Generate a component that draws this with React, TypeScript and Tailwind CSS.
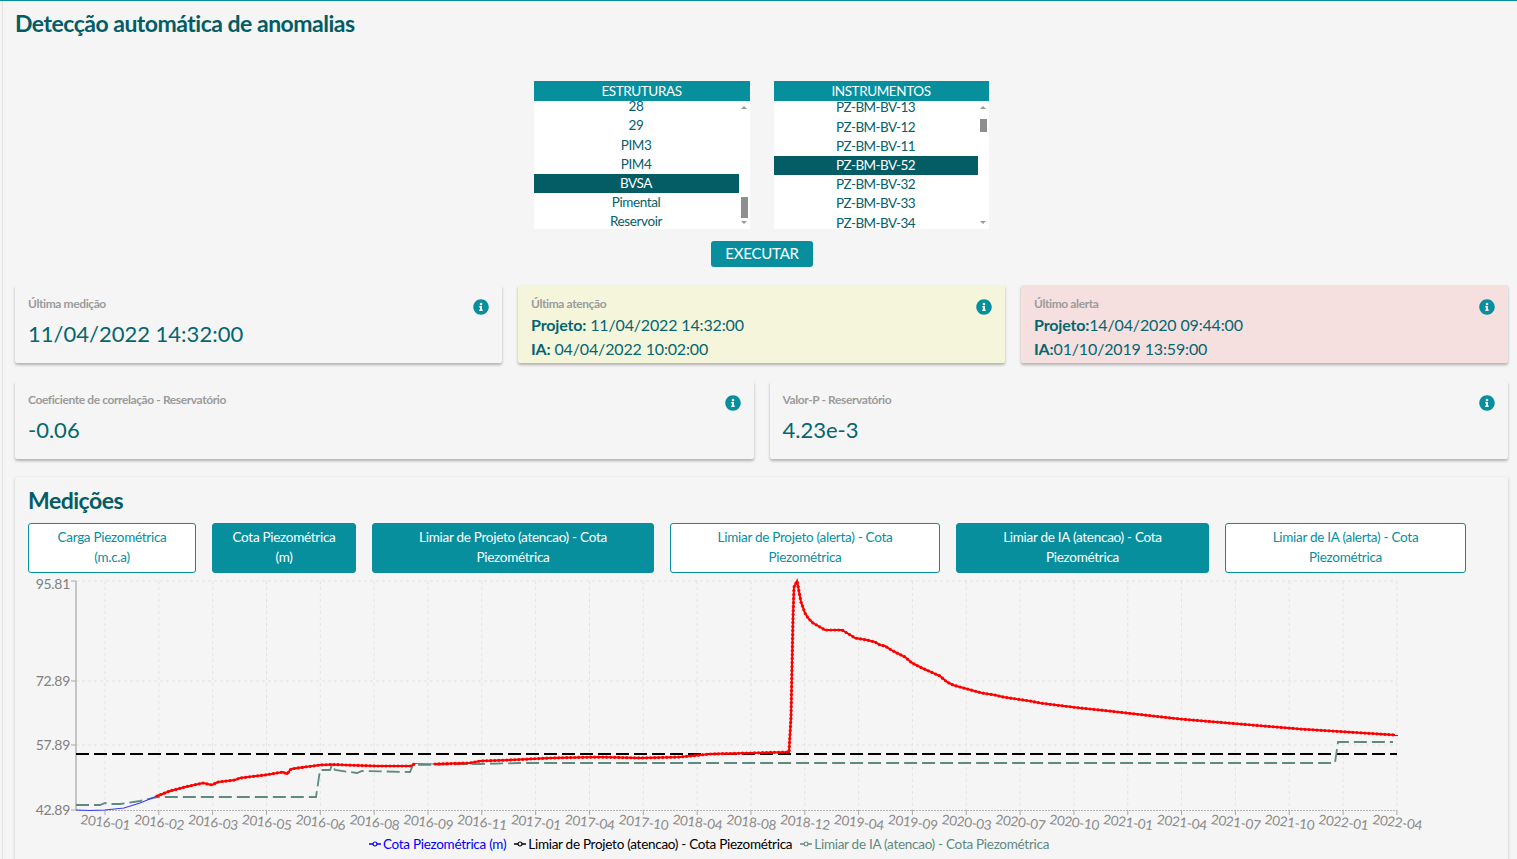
import { FaInfoCircle } from 'react-icons/fa';

const estruturas = ['28', '29', 'PIM3', 'PIM4', 'BVSA', 'Pimental', 'Reservoir'];
const instrumentos = ['PZ-BM-BV-13', 'PZ-BM-BV-12', 'PZ-BM-BV-11', 'PZ-BM-BV-52', 'PZ-BM-BV-32', 'PZ-BM-BV-33', 'PZ-BM-BV-34'];

const xLabels = [
  '2016-01', '2016-02', '2016-03', '2016-05', '2016-06', '2016-08', '2016-09', '2016-11', '2017-01',
  '2017-04', '2017-10', '2018-04', '2018-08', '2018-12', '2019-04', '2019-09', '2020-03', '2020-07',
  '2020-10', '2021-01', '2021-04', '2021-07', '2021-10', '2022-01', '2022-04',
];

type Pt = [number, number];

const blueLine: Pt[] = [[76, 810], [90, 810.5], [105, 810], [124, 808], [140, 803], [157, 796]];

const redA: Pt[] = [
  [157, 796], [170, 791], [185, 787], [203, 783], [212, 785], [218, 782], [235, 780], [240, 778], [265, 775],
  [283, 772], [287, 774], [291, 769], [305, 767], [320, 765], [332, 764.5], [375, 766], [411, 766], [415, 763.5],
];
const redB: Pt[] = [
  [435, 764], [470, 763], [480, 761], [510, 760], [550, 758], [600, 757], [640, 758], [680, 757], [710, 754],
  [750, 753], [789, 752], [791, 717], [793, 617], [794, 587], [797, 581], [798, 586], [801, 602], [805, 613],
  [808, 618], [813, 623], [820, 627], [825, 630], [842, 630], [847, 633], [852, 636], [855, 638], [867, 640],
  [875, 642], [880, 645], [885, 646], [893, 651], [905, 657], [912, 663], [922, 668], [940, 676], [947, 682],
  [953, 685], [960, 687], [982, 693], [995, 695], [1003, 697], [1030, 701], [1040, 703], [1080, 708],
  [1100, 710], [1180, 719], [1300, 729], [1395, 735],
];

const greenLine: Pt[] = [
  [76, 805], [100, 805], [105, 803], [110, 804], [120, 804], [140, 801], [157, 797], [316, 797], [320, 770],
  [330, 770], [332, 765], [335, 770], [357, 773], [362, 771], [410, 772], [413, 765], [480, 764], [520, 763],
  [1335, 763], [1338, 742], [1393, 742],
];

const toPoints = (pts: Pt[]) => pts.map(p => p.join(',')).join(' ');

// walks along the line and drops a marker every few px, like the chart's data points
function markers(pts: Pt[], step: number): Pt[] {
  const out: Pt[] = [];
  let left = 0;
  for (let i = 0; i < pts.length - 1; i++) {
    const [x1, y1] = pts[i];
    const [x2, y2] = pts[i + 1];
    const len = Math.hypot(x2 - x1, y2 - y1);
    let d = left;
    while (d < len) {
      out.push([x1 + ((x2 - x1) * d) / len, y1 + ((y2 - y1) * d) / len]);
      d += step;
    }
    left = d - len;
  }
  return out;
}

function ListBox({ title, items, selected, offset, thumb, width, tracking }: {
  title: string;
  items: string[];
  selected: string;
  offset: string;
  thumb: string;
  width: string;
  tracking: string;
}) {
  return (
    <div className={width}>
      <div className="h-5 bg-[#078f9e] text-center text-[13.5px] leading-5 tracking-[-0.4px] text-white">{title}</div>
      <div className="flex h-32 bg-white">
        <div className="flex-1 overflow-hidden">
          <div className={offset}>
            {items.map(item => (
              <div
                key={item}
                className={`h-[19.2px] text-center text-[13.5px] leading-[18px] ${tracking} ${item === selected ? 'bg-[#045c65] text-white' : 'text-[#04606a]'}`}
              >
                {item}
              </div>
            ))}
          </div>
        </div>
        <div className="flex w-[11px] flex-col items-center bg-white pt-[5px] pb-[5px]">
          <div className="h-0 w-0 border-x-[3px] border-b-[3px] border-x-transparent border-b-[#999]" />
          <div className={`w-[7px] bg-[#8f8f8f] ${thumb}`} />
          <div className="mt-auto h-0 w-0 border-x-[3px] border-t-[3px] border-x-transparent border-t-[#999]" />
        </div>
      </div>
    </div>
  );
}

function InfoCard({ label, bg = 'bg-[#f5f5f5]', children }: { label: string; bg?: string; children: React.ReactNode }) {
  return (
    <div className={`relative h-[78px] rounded-[2px] px-[13px] pt-[11px] shadow-[0_2px_3px_rgba(0,0,0,0.28)] ${bg}`}>
      <FaInfoCircle className="absolute top-[14px] right-[13px] text-[#078f9e]" size={16} />
      <div className="text-[12px] leading-4 font-bold tracking-[-0.4px] text-[#9c9c9c]">{label}</div>
      {children}
    </div>
  );
}

function BigValue({ children }: { children: React.ReactNode }) {
  return <div className="mt-[6px] text-[22px] leading-8 text-[#04666f]">{children}</div>;
}

function SmallValue({ label, value }: { label: string; value: string }) {
  return (
    <div className="text-[16px] leading-6 tracking-[-0.15px] text-[#04666f]">
      <b>{label}</b>{value}
    </div>
  );
}

function ToggleButton({ width, active, children }: { width: string; active: boolean; children: React.ReactNode }) {
  return (
    <div
      className={`flex h-[50px] items-center justify-center rounded-[3px] border border-[#078f9e] px-2 pb-[2px] text-center text-[13.5px] leading-5 tracking-[-0.28px] ${width} ${active ? 'bg-[#078f9e] text-white' : 'bg-white text-[#078f9e]'}`}
    >
      <span>{children}</span>
    </div>
  );
}

function LegendItem({ color, children }: { color: string; children: React.ReactNode }) {
  return (
    <span className="flex items-center gap-[2px]" style={{ color }}>
      <svg width="12" height="8" viewBox="0 0 12 8">
        <line x1="0" y1="4" x2="12" y2="4" stroke={color} strokeWidth="1.5" />
        <circle cx="6" cy="4" r="2" fill="#f5f5f5" stroke={color} strokeWidth="1.2" />
      </svg>
      {children}
    </span>
  );
}

function Chart() {
  const ticks = xLabels.map((_, i) => 105 + i * 53.83);
  return (
    <svg width="1470" height="262" viewBox="28 575 1470 262" className="mt-[2px] block">
      {ticks.map(x => (
        <line key={x} x1={x} y1="581" x2={x} y2="810" stroke="#e3e3e3" strokeDasharray="3 3" />
      ))}
      {[581, 681, 745].map(y => (
        <line key={y} x1="76" y1={y} x2="1397" y2={y} stroke="#e3e3e3" strokeDasharray="3 3" />
      ))}
      <line x1="76" y1="581" x2="76" y2="810" stroke="#c4c4c4" strokeWidth="2" />
      <line x1="76" y1="810.5" x2="1397" y2="810.5" stroke="#b5b5b5" strokeDasharray="2 1" />
      {[581, 681, 745, 810].map(y => (
        <line key={y} x1="71" y1={y} x2="76" y2={y} stroke="#aaa" />
      ))}
      {ticks.map(x => (
        <line key={x} x1={x} y1="810" x2={x} y2="815" stroke="#aaa" />
      ))}
      {[['95.81', 584], ['72.89', 681], ['57.89', 745], ['42.89', 810]].map(([t, y]) => (
        <text key={t} x="70" y={Number(y) + 5} textAnchor="end" fontSize="14" letterSpacing="-0.3" fill="#7f7f7f">{t}</text>
      ))}
      {xLabels.map((t, i) => (
        <text
          key={i}
          x={ticks[i] - 25}
          y="824"
          fontSize="13.5"
          letterSpacing="-0.3"
          fill="#8a8a8a"
          transform={`rotate(7 ${ticks[i] - 25} 824)`}
        >
          {t}
        </text>
      ))}
      <line x1="76" y1="754" x2="1397" y2="754" stroke="#000" strokeWidth="2" strokeDasharray="13 5" />
      <polyline points={toPoints(greenLine)} fill="none" stroke="#5f8a80" strokeWidth="1.8" strokeDasharray="13 5" />
      <polyline points={toPoints(blueLine)} fill="none" stroke="#3a3aff" strokeWidth="1.2" />
      <polyline points={toPoints([[415, 763.5], [435, 764]])} fill="none" stroke="#4a7f8f" strokeWidth="1.2" />
      <polyline points={toPoints([[1393, 735.5], [1398, 735.5]])} fill="none" stroke="#3a3aff" strokeWidth="1.2" />
      <polyline points={toPoints(redA)} fill="none" stroke="#ff0000" strokeWidth="2" />
      <polyline points={toPoints(redB)} fill="none" stroke="#ff0000" strokeWidth="2" />
      {[...markers(redA, 4), ...markers(redB, 4)].map(([x, y], i) => (
        <circle key={i} cx={x} cy={y} r="1.6" fill="#ff0000" />
      ))}
    </svg>
  );
}

export default function App() {
  return (
    <div className="h-[859px] overflow-hidden border-t border-[#078f9e] bg-[#f5f5f5] font-['Lato',sans-serif]">
      <div className="ml-[2px] h-full border-l border-[#e2e2e2] pr-[9px] pl-3">
        <h1 className="pt-[7px] text-[23px] leading-[30px] font-bold tracking-[-0.5px] text-[#045c65]">
          Detecção automática de anomalias
        </h1>

        <div className="mt-[43px] flex justify-center gap-6 pr-[1px]">
          <ListBox title="ESTRUTURAS" items={estruturas} selected="BVSA" offset="-mt-[3.8px]" thumb="mt-[88px] h-[21px]" width="w-[216px]" tracking="tracking-[-0.4px]" />
          <ListBox title="INSTRUMENTOS" items={instrumentos} selected="PZ-BM-BV-52" offset="-mt-[2.6px]" thumb="mt-[10px] h-[13px]" width="w-[215px]" tracking="tracking-[-0.6px]" />
        </div>

        <div className="mt-3 flex justify-center pl-[1px]">
          <div className="flex h-[26px] w-[102px] items-center justify-center rounded-[3px] bg-[#078f9e] pb-[1px] text-[15px] tracking-[-0.2px] text-white">
            EXECUTAR
          </div>
        </div>

        <div className="mt-[18px] grid grid-cols-3 gap-4">
          <InfoCard label="Última medição">
            <BigValue>11/04/2022 14:32:00</BigValue>
          </InfoCard>
          <InfoCard label="Última atenção" bg="bg-[#f5f5dc]">
            <div className="mt-[1px]">
              <SmallValue label="Projeto:" value=" 11/04/2022 14:32:00" />
              <SmallValue label="IA:" value=" 04/04/2022 10:02:00" />
            </div>
          </InfoCard>
          <InfoCard label="Último alerta" bg="bg-[#f5dfdf]">
            <div className="mt-[1px]">
              <SmallValue label="Projeto:" value="14/04/2020 09:44:00" />
              <SmallValue label="IA:" value="01/10/2019 13:59:00" />
            </div>
          </InfoCard>
        </div>

        <div className="mt-[18px] grid grid-cols-2 gap-4">
          <InfoCard label="Coeficiente de correlação - Reservatório">
            <BigValue>-0.06</BigValue>
          </InfoCard>
          <InfoCard label="Valor-P - Reservatório">
            <BigValue>4.23e-3</BigValue>
          </InfoCard>
        </div>

        <div className="mt-[18px] h-[400px] rounded-[2px] px-[13px] pt-[7px] shadow-[0_1px_3px_rgba(0,0,0,0.22)]">
          <h2 className="text-[23px] leading-8 font-bold tracking-[-0.5px] text-[#045c65]">Medições</h2>
          <div className="mt-[7px] flex gap-4">
            <ToggleButton width="w-[168px]" active={false}>Carga Piezométrica<br />(m.c.a)</ToggleButton>
            <ToggleButton width="w-[144px]" active>Cota Piezométrica<br />(m)</ToggleButton>
            <ToggleButton width="w-[282px]" active>Limiar de Projeto (atencao) - Cota<br />Piezométrica</ToggleButton>
            <ToggleButton width="w-[270px]" active={false}>Limiar de Projeto (alerta) - Cota<br />Piezométrica</ToggleButton>
            <ToggleButton width="w-[253px]" active>Limiar de IA (atencao) - Cota<br />Piezométrica</ToggleButton>
            <ToggleButton width="w-[241px]" active={false}>Limiar de IA (alerta) - Cota<br />Piezométrica</ToggleButton>
          </div>
          <Chart />
          <div className="flex w-[1362px] justify-center gap-[8px] text-[13.5px] leading-[14px] tracking-[-0.28px]">
            <LegendItem color="#0000ff">Cota Piezométrica (m)</LegendItem>
            <LegendItem color="#000000">Limiar de Projeto (atencao) - Cota Piezométrica</LegendItem>
            <LegendItem color="#5f8a80">Limiar de IA (atencao) - Cota Piezométrica</LegendItem>
          </div>
        </div>
      </div>
    </div>
  );
}
